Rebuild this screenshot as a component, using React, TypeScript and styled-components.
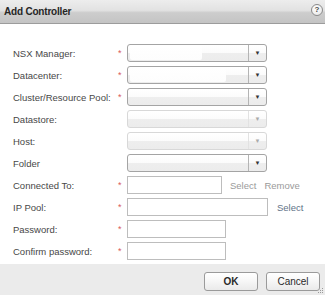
import * as React from "react";
import styled, { createGlobalStyle } from "styled-components";

const GlobalStyle = createGlobalStyle`
  html, body {
    margin: 0;
    padding: 0;
    background: #ffffff;
  }
  body {
    font-family: "Liberation Sans", Arial, sans-serif;
  }
`;

type Row =
  | { label: string; kind: "select"; required: boolean; disabled?: boolean; value?: number }
  | { label: string; kind: "text"; required: boolean; width: number; links?: { text: string; muted: boolean }[] };

const rows: Row[] = [
  { label: "NSX Manager:", kind: "select", required: true, value: 72 },
  { label: "Datacenter:", kind: "select", required: true, value: 96 },
  { label: "Cluster/Resource Pool:", kind: "select", required: true },
  { label: "Datastore:", kind: "select", required: false, disabled: true },
  { label: "Host:", kind: "select", required: false, disabled: true },
  { label: "Folder", kind: "select", required: false },
  {
    label: "Connected To:",
    kind: "text",
    required: true,
    width: 95,
    links: [
      { text: "Select", muted: true },
      { text: "Remove", muted: true },
    ],
  },
  { label: "IP Pool:", kind: "text", required: true, width: 141, links: [{ text: "Select", muted: false }] },
  { label: "Password:", kind: "text", required: true, width: 99 },
  { label: "Confirm password:", kind: "text", required: true, width: 99 },
];

export default function App() {
  return (
    <>
      <GlobalStyle />
      <Dialog>
        <TitleBar>
          <Title>Add Controller</Title>
          <HelpIcon>?</HelpIcon>
        </TitleBar>
        <Body>
          <FormGrid>
            {rows.map(row => (
              <React.Fragment key={row.label}>
                <Label>{row.label}</Label>
                <Star>{row.required ? "*" : ""}</Star>
                {row.kind === "select" ? (
                  <Select $disabled={!!row.disabled}>
                    <SelectValue>
                      {row.value ? <Redacted style={{ width: row.value }} /> : null}
                    </SelectValue>
                    <Arrow $disabled={!!row.disabled}>▼</Arrow>
                  </Select>
                ) : (
                  <FieldLine>
                    <TextInput style={{ width: row.width }} />
                    {row.links?.map(l => (
                      <Link key={l.text} $muted={l.muted}>
                        {l.text}
                      </Link>
                    ))}
                  </FieldLine>
                )}
              </React.Fragment>
            ))}
          </FormGrid>
        </Body>
        <Footer>
          <Button $primary>OK</Button>
          <Button>Cancel</Button>
          <Grip width="6" height="6" viewBox="0 0 6 6">
            <rect x="4" y="0" width="1" height="1" fill="#999" />
            <rect x="2" y="2" width="1" height="1" fill="#999" />
            <rect x="4" y="2" width="1" height="1" fill="#999" />
            <rect x="0" y="4" width="1" height="1" fill="#999" />
            <rect x="2" y="4" width="1" height="1" fill="#999" />
            <rect x="4" y="4" width="1" height="1" fill="#999" />
          </Grip>
        </Footer>
      </Dialog>
    </>
  );
}

const Dialog = styled.div`
  width: 325px;
  height: 295px;
  display: flex;
  flex-direction: column;
  background: #ffffff;
`;

const TitleBar = styled.div`
  height: 23px;
  border-bottom: 1px solid #9c9c9c;
  background: linear-gradient(#ededed 0%, #e2e2e2 45%, #cdcdcd 55%, #c4c4c4 100%);
  display: flex;
  align-items: center;
  justify-content: space-between;
  padding: 0 2px 0 4px;
`;

const Title = styled.div`
  font-size: 10px;
  font-weight: bold;
  letter-spacing: -0.2px;
  color: #262626;
  margin-top: -1px;
`;

const HelpIcon = styled.div`
  width: 10px;
  height: 10px;
  border: 1px solid #8a8a8a;
  border-radius: 50%;
  background: radial-gradient(circle at 40% 35%, #ffffff, #e4e4e4);
  color: #4a4a4a;
  font-size: 8px;
  font-weight: bold;
  line-height: 10px;
  text-align: center;
  margin-top: -3px;
`;

const Body = styled.div`
  flex: 1;
  padding: 20px 0 0 13px;
`;

const FormGrid = styled.div`
  display: grid;
  grid-template-columns: 104px 10px auto;
  grid-auto-rows: 18px;
  row-gap: 4px;
  align-items: center;
`;

const Label = styled.div`
  font-size: 9.5px;
  color: #474747;
  white-space: nowrap;
`;

const Star = styled.div`
  font-size: 9px;
  color: #d9585a;
  line-height: 18px;
  padding-left: 1px;
`;

const Select = styled.div<{ $disabled: boolean }>`
  width: 140px;
  height: 18px;
  box-sizing: border-box;
  border: 1px solid ${p => (p.$disabled ? "#d8d8d8" : "#a4a4a4")};
  border-radius: 3px;
  background: linear-gradient(#ffffff 0%, #fbfbfb 50%, #eeeeee 51%, #ececec 100%);
  display: flex;
  overflow: hidden;
`;

const SelectValue = styled.div`
  flex: 1;
  padding: 1px 2px;
  display: flex;
`;

const Redacted = styled.div`
  height: 14px;
  background: linear-gradient(#ffffff, #fdfdfd);
  border-radius: 2px;
`;

const Arrow = styled.div<{ $disabled: boolean }>`
  width: 17px;
  border-left: 1px solid ${p => (p.$disabled ? "#e2e2e2" : "#b4b4b4")};
  font-size: 6px;
  color: ${p => (p.$disabled ? "#aaaaaa" : "#333333")};
  display: flex;
  align-items: center;
  justify-content: center;
`;

const FieldLine = styled.div`
  display: flex;
  align-items: center;
  gap: 8px;
`;

const TextInput = styled.div`
  height: 18px;
  box-sizing: border-box;
  border: 1px solid #bdbdbd;
  background: #ffffff;
`;

const Link = styled.span<{ $muted: boolean }>`
  font-size: 9.5px;
  color: ${p => (p.$muted ? "#9a9a9a" : "#5f7388")};
  margin-left: ${p => (p.$muted ? "0" : "1px")};
`;

const Footer = styled.div`
  position: relative;
  height: 31px;
  box-sizing: border-box;
  background: #ebebeb;
  display: flex;
  justify-content: flex-end;
  align-items: flex-start;
  gap: 8px;
  padding: 8px 5px 0 0;
`;

const Button = styled.div<{ $primary?: boolean }>`
  width: 54px;
  height: 19px;
  box-sizing: border-box;
  border: 1px solid #9a9a9a;
  border-radius: 3px;
  background: linear-gradient(#ffffff 0%, #f6f6f6 50%, #eaeaea 100%);
  font-size: 10px;
  font-weight: ${p => (p.$primary ? "bold" : "normal")};
  color: #2a2a2a;
  display: flex;
  align-items: center;
  justify-content: center;
`;

const Grip = styled.svg`
  position: absolute;
  right: 1px;
  bottom: 1px;
`;
